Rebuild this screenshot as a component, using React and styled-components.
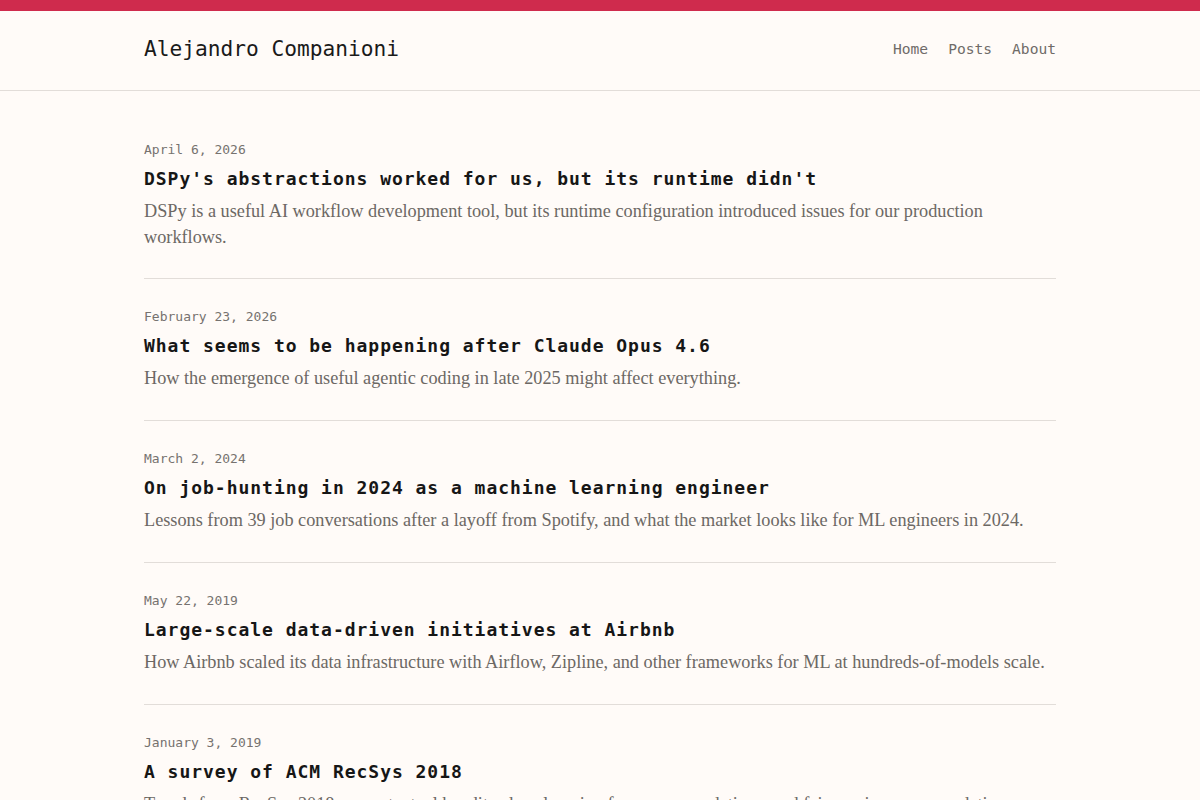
import React from "react";
import styled, { createGlobalStyle } from "styled-components";

const Global = createGlobalStyle`
  html, body { margin: 0; padding: 0; background: #fffbf8; }
  body { font-family: "DejaVu Sans Mono", monospace; color: #1a1a1a; }
  * { box-sizing: border-box; }
`;

const TopBar = styled.div`
  height: 11px;
  background: #cf2b4d;
`;

const Header = styled.header`
  border-bottom: 1px solid #e2ddd9;
`;

const HeaderInner = styled.div`
  width: 912px;
  margin: 0 auto;
  height: 79px;
  display: flex;
  align-items: center;
  justify-content: space-between;
`;

const SiteTitle = styled.a`
  font-family: "DejaVu Sans Mono", monospace;
  font-size: 21.2px;
  color: #1a1a1a;
  text-decoration: none;
  margin-top: -5px;
`;

const Nav = styled.nav`
  display: flex;
  gap: 20px;
  margin-top: -5px;
`;

const NavLink = styled.a`
  font-family: "DejaVu Sans Mono", monospace;
  font-size: 14.6px;
  color: #6f6b68;
  text-decoration: none;
`;

const Main = styled.main`
  width: 912px;
  margin: 0 auto;
  padding-top: 21px;
`;

const Post = styled.article`
  padding: 28px 0 28px;
  border-bottom: 1px solid #e2ddd9;
  display: flex;
  flex-direction: column;
  gap: 4px;

  & + & {
    padding-bottom: 29px;
  }
`;

const PostDate = styled.div`
  font-family: "DejaVu Sans Mono", monospace;
  font-size: 13px;
  line-height: 20px;
  color: #76726f;
`;

const PostTitle = styled.a`
  font-family: "DejaVu Sans Mono", monospace;
  font-weight: bold;
  font-size: 18px;
  letter-spacing: 0.97px;
  line-height: 30px;
  color: #161616;
  text-decoration: none;
`;

const PostDesc = styled.p`
  margin: 0;
  font-family: "Liberation Serif", serif;
  font-size: 18.25px;
  line-height: 26px;
  color: #6c6864;
`;

const posts = [
  {
    date: "April 6, 2026",
    title: "DSPy's abstractions worked for us, but its runtime didn't",
    desc: "DSPy is a useful AI workflow development tool, but its runtime configuration introduced issues for our production workflows.",
  },
  {
    date: "February 23, 2026",
    title: "What seems to be happening after Claude Opus 4.6",
    desc: "How the emergence of useful agentic coding in late 2025 might affect everything.",
  },
  {
    date: "March 2, 2024",
    title: "On job-hunting in 2024 as a machine learning engineer",
    desc: "Lessons from 39 job conversations after a layoff from Spotify, and what the market looks like for ML engineers in 2024.",
  },
  {
    date: "May 22, 2019",
    title: "Large-scale data-driven initiatives at Airbnb",
    desc: "How Airbnb scaled its data infrastructure with Airflow, Zipline, and other frameworks for ML at hundreds-of-models scale.",
  },
  {
    date: "January 3, 2019",
    title: "A survey of ACM RecSys 2018",
    desc: "Trends from RecSys 2018 — contextual bandits, deep learning for recommendations, and fairness in recommendation applications.",
  },
];

export default function App() {
  return (
    <>
      <Global />
      <TopBar />
      <Header>
        <HeaderInner>
          <SiteTitle href="#">Alejandro Companioni</SiteTitle>
          <Nav>
            <NavLink href="#">Home</NavLink>
            <NavLink href="#">Posts</NavLink>
            <NavLink href="#">About</NavLink>
          </Nav>
        </HeaderInner>
      </Header>
      <Main>
        {posts.map((p) => (
          <Post key={p.title}>
            <PostDate>{p.date}</PostDate>
            <PostTitle href="#">{p.title}</PostTitle>
            <PostDesc>{p.desc}</PostDesc>
          </Post>
        ))}
      </Main>
    </>
  );
}
